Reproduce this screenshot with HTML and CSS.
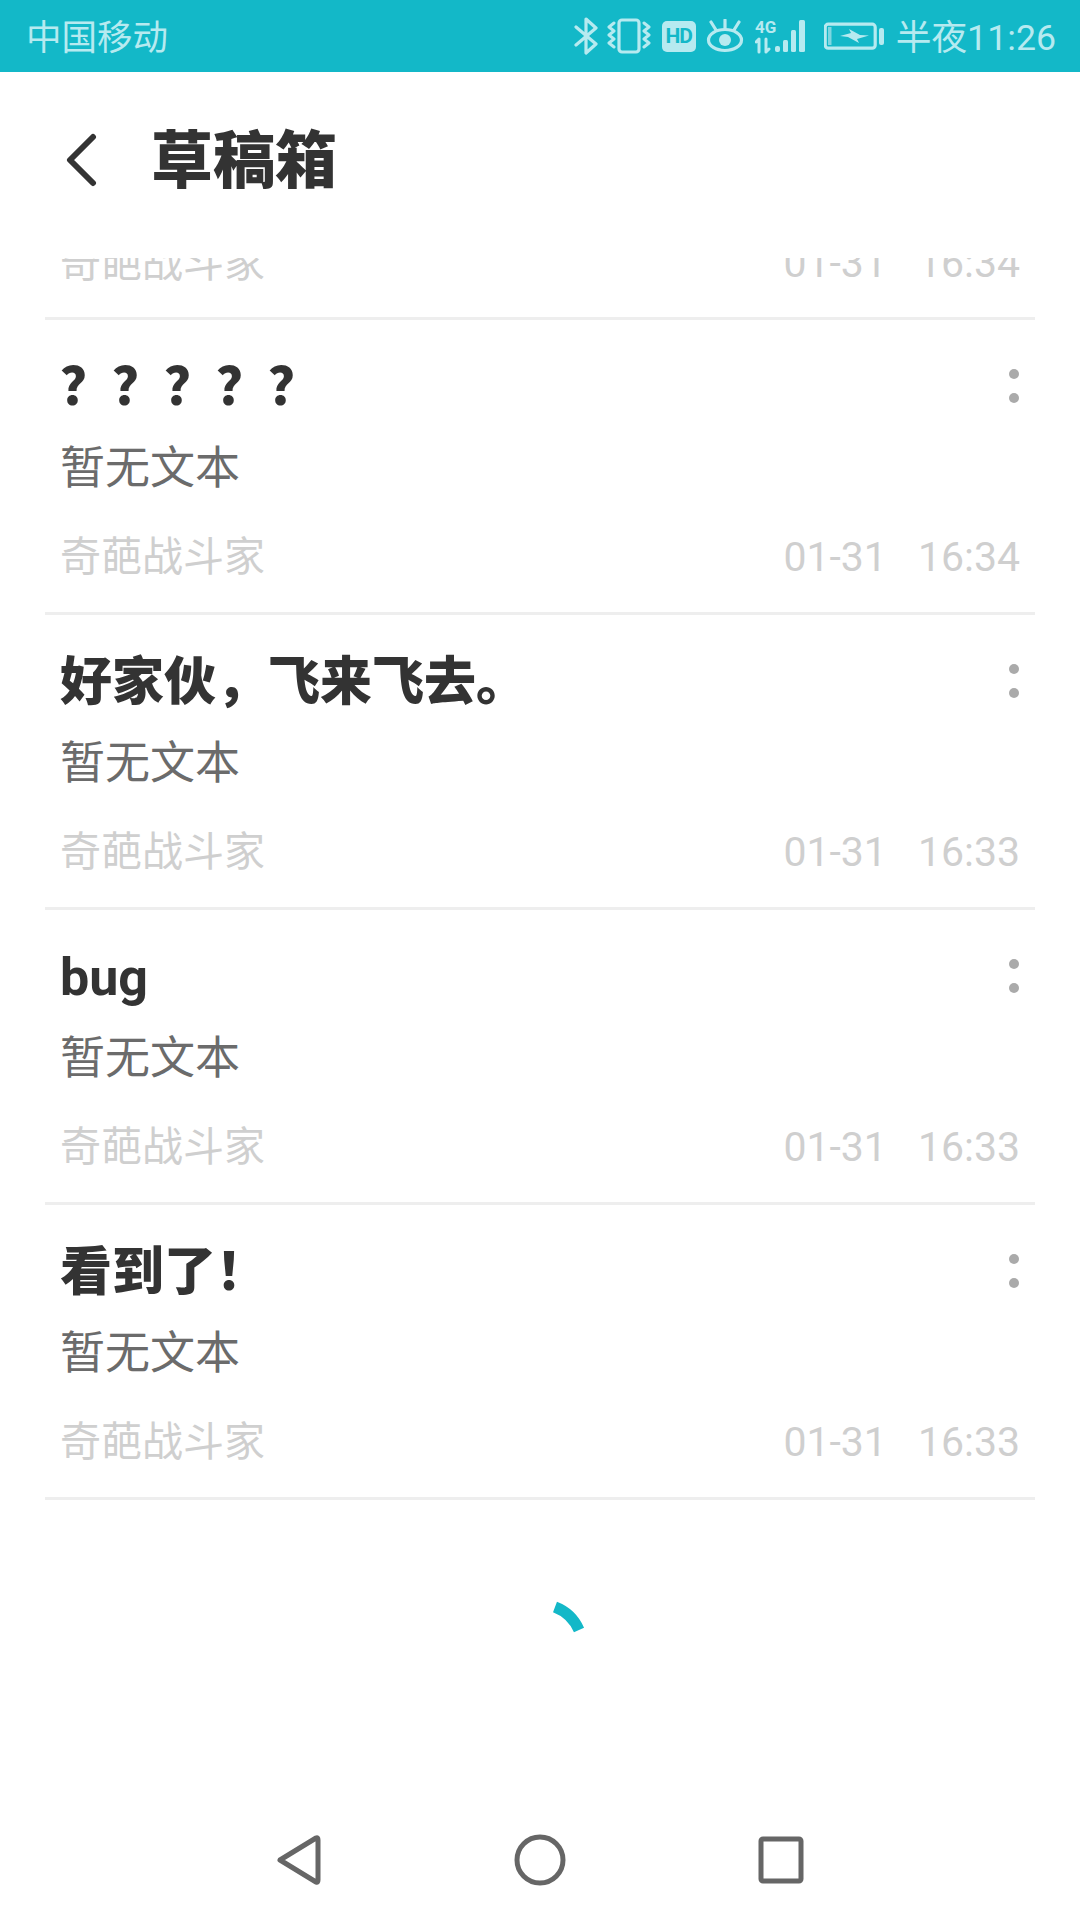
FILE: index.html
```html
<!DOCTYPE html>
<html lang="zh-CN">
<head>
<meta charset="utf-8">
<title>草稿箱</title>
<link rel="stylesheet" href="styles.css">
</head>
<body>
<div class="screen">
  <div class="status">
    <span class="carrier">中国移动</span>
    <div class="status-right">
      <svg class="ico-bt" width="24" height="38" viewBox="0 0 24 38"><path class="st" d="M2 10 L22 27 L12 36 V2 L22 11 L2 28"/></svg>
      <svg class="ico-vib" width="44" height="36" viewBox="0 0 44 36"><rect class="st" x="12" y="2" width="20" height="32" rx="3"/><path class="st2" d="M7 5 L2 9 L7 13 L2 17 L7 21 L2 25 L7 29"/><path class="st2" d="M37 5 L42 9 L37 13 L42 17 L37 21 L42 25 L37 29"/></svg>
      <span class="hd">HD</span>
      <svg class="ico-eye" width="38" height="34" viewBox="0 0 38 34"><ellipse class="st" cx="19" cy="21" rx="16.5" ry="10.5"/><circle class="fl" cx="19" cy="21" r="6"/><path class="st" d="M19 1 V9 M5 3 L10 11 M33 3 L28 11"/></svg>
      <svg class="ico-sig" width="54" height="36" viewBox="0 0 54 36"><text class="sig-text" x="0" y="15">4G</text><path class="st2" d="M4 21 V34 M1 24 L4 21 M11 21 V34 M11 34 L14 31"/><rect class="fl" x="20" y="28" width="5" height="6" rx="2"/><rect class="fl" x="28" y="22" width="5" height="12" rx="1.5"/><rect class="fl" x="36" y="12" width="5" height="22" rx="1.5"/><rect class="fl" x="44" y="2" width="6" height="32" rx="1.5"/></svg>
      <svg class="ico-bat" width="60" height="30" viewBox="0 0 60 30"><rect class="st" x="1.2" y="3.2" width="50" height="24" rx="3"/><rect class="dim" x="4" y="6" width="3.5" height="18"/><path class="fl" d="M16 15 L27 12 L25 8 L36 14 L45 14.5 L33 18 L35 22 L24 16 Z"/><rect class="fl" x="55" y="7" width="5" height="17" rx="2"/></svg>
      <span class="clock">半夜11:26</span>
    </div>
  </div>

  <header class="header">
    <svg class="back" width="34" height="54" viewBox="0 0 34 54"><path d="M29 4 L6 27 L29 50"/></svg>
    <h1 class="page-title">草稿箱</h1>
  </header>

  <div class="row row-clip">
    <div class="meta"><span>奇葩战斗家</span><span class="when"><span>01-31</span><span>16:34</span></span></div>
  </div>

  <div class="row">
    <div class="head"><span class="title">？？？？？</span><span class="more"><i></i><i></i></span></div>
    <div class="sub">暂无文本</div>
    <div class="meta"><span>奇葩战斗家</span><span class="when"><span>01-31</span><span>16:34</span></span></div>
  </div>
  <div class="row">
    <div class="head"><span class="title">好家伙，飞来飞去。</span><span class="more"><i></i><i></i></span></div>
    <div class="sub">暂无文本</div>
    <div class="meta"><span>奇葩战斗家</span><span class="when"><span>01-31</span><span>16:33</span></span></div>
  </div>
  <div class="row">
    <div class="head"><span class="title title-latin">bug</span><span class="more"><i></i><i></i></span></div>
    <div class="sub">暂无文本</div>
    <div class="meta"><span>奇葩战斗家</span><span class="when"><span>01-31</span><span>16:33</span></span></div>
  </div>
  <div class="row">
    <div class="head"><span class="title">看到了！</span><span class="more"><i></i><i></i></span></div>
    <div class="sub">暂无文本</div>
    <div class="meta"><span>奇葩战斗家</span><span class="when"><span>01-31</span><span>16:33</span></span></div>
  </div>

  <div class="loading">
    <svg width="100" height="100" viewBox="0 0 100 100"><path d="M65 10 A43 43 0 0 1 89 33"/></svg>
  </div>

  <nav class="nav">
    <svg width="240" height="60" viewBox="0 0 240 60"><path d="M100 30 L136 8 Q138 7 138 10 V50 Q138 53 136 52 Z"/></svg>
    <svg width="240" height="60" viewBox="0 0 240 60"><circle cx="120" cy="30" r="23"/></svg>
    <svg width="240" height="60" viewBox="0 0 240 60"><rect x="101" y="9" width="40" height="42" rx="2"/></svg>
  </nav>
</div>
</body>
</html>
```

FILE: styles.css
```css
* { box-sizing: border-box; }
html, body { margin: 0; padding: 0; background: #fff; }
body { width: 1080px; height: 1920px; overflow: hidden; font-family: Roboto, "Noto Sans CJK SC", sans-serif; }
.screen { width: 1080px; height: 1920px; display: flex; flex-direction: column; background: #fff; }

.status { flex: 0 0 72px; height: 72px; background: #13b8c8; color: #b6eaf0; display: flex; align-items: center; justify-content: space-between; padding: 4px 24px 0 26px; }
.carrier { font-size: 35.5px; line-height: 68px; }
.status-right { display: flex; align-items: center; margin-top: -4px; }
.status-right svg { display: block; }
.st { fill: none; stroke: #b6eaf0; stroke-width: 3.2; stroke-linejoin: round; stroke-linecap: round; }
.st2 { fill: none; stroke: #b6eaf0; stroke-width: 3; stroke-linejoin: round; stroke-linecap: round; }
.fl { fill: #b6eaf0; }
.dim { fill: #7fd6e0; }
.sig-text { font-family: Roboto, sans-serif; font-weight: 700; font-size: 17px; fill: #b6eaf0; }
.ico-bt { margin-right: 9px; }
.ico-vib { margin-right: 11px; }
.hd { width: 34px; height: 31px; margin-right: 10px; border-radius: 5px; background: #b6eaf0; color: #13b8c8; font-size: 21px; font-weight: 700; line-height: 31px; text-align: center; letter-spacing: -1px; }
.ico-eye { margin-right: 11px; }
.ico-sig { margin-right: 15px; }
.ico-bat { margin-right: 12px; }
.clock { font-size: 35.7px; line-height: 72px; padding-top: 4px; }

.header { flex: 0 0 186px; height: 186px; display: flex; align-items: center; padding: 0 0 10px 64px; }
.back { display: block; margin-right: 53px; }
.back path { fill: none; stroke: #333; stroke-width: 6; stroke-linecap: round; stroke-linejoin: round; }
.page-title { margin: 4px 0 0; font-size: 62px; line-height: 80px; font-weight: 900; color: #333; }

.row { flex: 0 0 295px; height: 295px; margin: 0 45px; padding: 38px 15px 0 15px; border-bottom: 3px solid #eeeeee; display: flex; flex-direction: column; }
.row-clip { flex: 0 0 62px; height: 62px; padding-top: 0; justify-content: flex-end; overflow: hidden; }
.row-clip .meta { flex: 0 0 50px; margin: 0 0 29px; }

.head { display: flex; justify-content: space-between; align-items: center; height: 60px; }
.title { font-size: 52px; line-height: 60px; font-weight: 900; color: #333; }
.title-latin { font-weight: 700; }
.more { display: flex; flex-direction: column; gap: 14px; margin: -4px 1px 0 0; }
.more i { display: block; width: 10px; height: 10px; border-radius: 50%; background: #aaaaaa; }

.sub { margin-top: 21px; font-size: 45px; line-height: 60px; color: #6b6b6b; }
.meta { margin-top: 33px; display: flex; justify-content: space-between; font-size: 41px; line-height: 50px; color: #cfcfcf; }
.when { display: flex; gap: 31px; }

.loading { flex: 1 1 auto; display: flex; align-items: center; justify-content: center; padding-bottom: 6px; }
.loading svg { display: block; }
.loading path { fill: none; stroke: #13b8c8; stroke-width: 11; }

.nav { flex: 0 0 120px; height: 120px; display: flex; align-items: center; justify-content: center; }
.nav svg { display: block; }
.nav path, .nav circle, .nav rect { fill: none; stroke: #666; stroke-width: 5; stroke-linejoin: round; }
```
